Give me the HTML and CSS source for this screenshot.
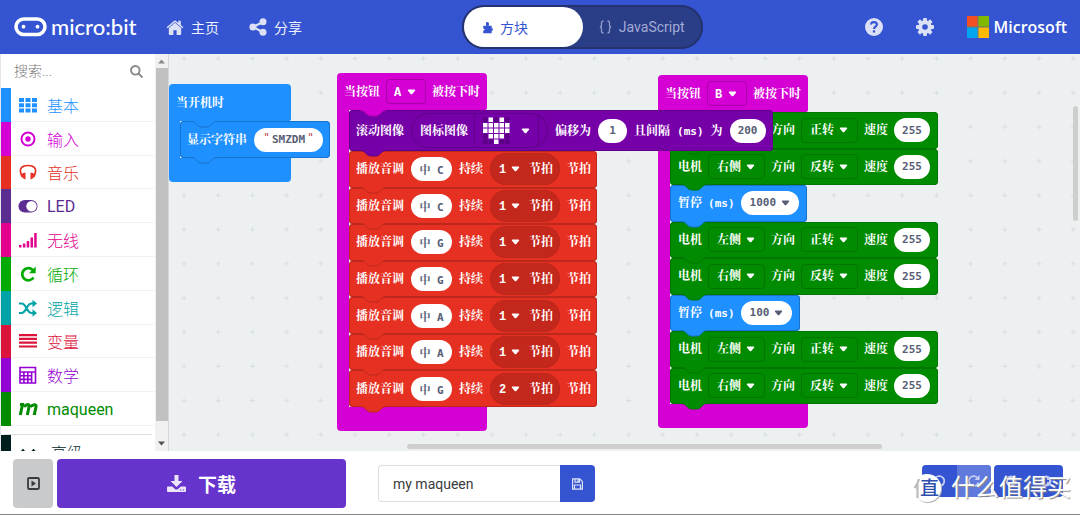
FILE: index.html
```html
<!DOCTYPE html>
<html lang="zh-CN">
<head>
<meta charset="utf-8">
<meta name="viewport" content="width=device-width, initial-scale=1">
<title>my maqueen - micro:bit</title>
<link rel="stylesheet" href="styles.css">
</head>
<body>
<svg class="defs" aria-hidden="true">
  <symbol id="tab" viewBox="0 0 26 8"><path class="tab-fill" d="M0 0V1.5C3 1.5 4 2.5 5 3.500L7 5.500Q8.500 7 11 7H16Q18 7 19.500 5.500L21.500 3.500Q23 1.500 26 1.500V0Z"/><path class="tab-line" d="M0 1.500C3 1.500 4 2.500 5 3.500L7 5.500Q8.500 7 11 7H16Q18 7 19.500 5.500L21.500 3.500Q23 1.500 26 1.500"/></symbol>
</svg>
<header class="topbar">
  <a class="brand" href="#">
    <svg width="33" height="20" viewBox="0 0 33 20"><rect x="2" y="2" width="29" height="15.500" rx="7.750" fill="none" stroke="#fff" stroke-width="3.600"/><circle cx="9.500" cy="9.700" r="1.900" fill="#fff"/><circle cx="23.500" cy="9.700" r="1.900" fill="#fff"/></svg>
    <span>micro:bit</span>
  </a>
  <a class="navlink home" href="#">
    <svg width="18" height="17" viewBox="0 0 18 17" fill="#dce1f7"><path d="M9 3.800 2.800 9v6.200q0 .8.800.8h3.800v-4.800h3.200V16h3.800q.8 0 .8-.8V9z"/><path d="M.6 8.200 8.200 1.700q.8-.6 1.600 0l2.500 2.200V1.800h2.500v4.300l2.600 2.100-.9 1.100L9 2.900 1.500 9.300z"/></svg>
    <span>主页</span>
  </a>
  <a class="navlink" href="#">
    <svg width="18" height="18" viewBox="0 0 18 18"><path d="M14 4 4 9l10 5.300" fill="none" stroke="#dce1f7" stroke-width="2.200"/><g fill="#dce1f7"><circle cx="14" cy="3.800" r="3.500"/><circle cx="3.900" cy="9" r="3.500"/><circle cx="14" cy="14.300" r="3.500"/></g></svg>
    <span>分享</span>
  </a>
  <div class="modes">
    <button class="mode active" type="button">
      <svg width="10" height="13" viewBox="0 0 10 13" fill="#3454d1"><path d="M.3 4.800h3.200C2.400 3 2.900 1 4.400 1s2.100 1.800 1.200 3.800h3.100v2.600q1.300-.3 1.300 1t-1.300 1v2.800H.3V9.300c1.900.7 1.900-2.100 0-1.400z"/></svg>
      <span>方块</span>
    </button>
    <button class="mode" type="button">
      <svg width="13" height="14" viewBox="0 0 13 14" fill="none" stroke="#929ccc" stroke-width="1.300"><path d="M4.500 1Q2.500 1 2.500 3v2Q2.500 7 .8 7q1.700 0 1.700 2v2q0 2 2 2M8.500 1q2 0 2 2v2q0 2 1.700 2-1.700 0-1.700 2v2q0 2-2 2"/></svg>
      <span>JavaScript</span>
    </button>
  </div>
  <div class="tools">
    <button class="icon-btn" type="button" aria-label="帮助">
      <svg width="18" height="18" viewBox="0 0 18 18"><circle cx="9" cy="9" r="9" fill="#dce1f7"/><path d="M6 6.500C6.300 3.300 11.900 3.300 11.900 6.600c0 2.100-2.900 2.100-2.900 4.400" fill="none" stroke="#3454d1" stroke-width="2.100"/><rect x="7.900" y="12.300" width="2.200" height="2.200" fill="#3454d1"/></svg>
    </button>
    <button class="icon-btn" type="button" aria-label="设置">
      <svg width="18" height="18" viewBox="-9 -9 18 18" fill="#dce1f7"><g id="teeth"><rect x="-1.900" y="-9" width="3.800" height="18" rx=".8"/><rect x="-9" y="-1.900" width="18" height="3.800" rx=".8"/></g><use href="#teeth" transform="rotate(45)"/><circle r="6.700"/><circle r="2.800" fill="#3454d1"/></svg>
    </button>
    <a class="ms" href="#">
      <svg width="22" height="22" viewBox="0 0 22 22"><rect width="22" height="22" fill="#737373"/><path fill="#f25022" d="M0 0h10.500v10.500H0z"/><path fill="#7fba00" d="M11.500 0H22v10.500H11.500z"/><path fill="#00a4ef" d="M0 11.500h10.500V22H0z"/><path fill="#ffb900" d="M11.500 11.500H22V22H11.500z"/></svg>
      <span>Microsoft</span>
    </a>
  </div>
</header>

<main class="editor">
  <aside class="toolbox">
    <div class="toolbox-list">
      <div class="search">
        <input type="text" placeholder="搜索..." aria-label="搜索">
        <svg width="13" height="13" viewBox="0 0 13 13" fill="none" stroke="#888" stroke-width="1.900"><circle cx="5.300" cy="5.300" r="4.300"/><path d="m8.500 8.500 4 4"/></svg>
      </div>
      <nav class="cats">
        <a class="cat basic" href="#"><svg width="20" height="20" viewBox="0 0 20 20" fill="currentColor"><path d="M1 3h5v4H1zM7.500 3h5v4h-5zM14 3h5v4h-5zM1 8.300h5v4H1zM7.500 8.300h5v4h-5zM14 8.300h5v4h-5zM1 13.600h5v4H1zM7.500 13.600h5v4h-5zM14 13.600h5v4h-5z"/></svg><span>基本</span></a>
        <a class="cat input" href="#"><svg width="20" height="20" viewBox="0 0 20 20"><circle cx="10" cy="10" r="6.500" fill="none" stroke="currentColor" stroke-width="2"/><circle cx="10" cy="10" r="2.700" fill="currentColor"/></svg><span>输入</span></a>
        <a class="cat music" href="#"><svg width="20" height="20" viewBox="0 0 20 20"><path d="M4.300 15C-1 4.500 6 3.500 10 3.500s11 1 5.700 11.500" fill="none" stroke="currentColor" stroke-width="1.700"/><path d="M4 11.500 7.500 10.500V17.500L4.500 16zM16 11.500l-3.500-1v7l3-1.500z" fill="currentColor"/></svg><span>音乐</span></a>
        <a class="cat led" href="#"><svg width="20" height="20" viewBox="0 0 20 20"><rect x=".5" y="4" width="19" height="12.500" rx="6.250" fill="currentColor"/><circle cx="13.500" cy="10.250" r="5.200" fill="#fff"/></svg><span>LED</span></a>
        <a class="cat radio" href="#"><svg width="20" height="20" viewBox="0 0 20 20" fill="currentColor"><path d="M1 15h2.500v2.500H1zM4.900 13.500h2.500v4H4.900zM8.700 11h2.500v6.500H8.700zM12.500 7.500H15v10h-2.500zM16.200 3h2.500v14.500h-2.500z"/></svg><span>无线</span></a>
        <a class="cat loops" href="#"><svg width="20" height="20" viewBox="0 0 20 20"><path d="M15.500 13.500A6.100 6.100 0 1 1 14.700 6" fill="none" stroke="currentColor" stroke-width="2.700"/><path d="M17.700 2.500v6.800H11z" fill="currentColor"/></svg><span>循环</span></a>
        <a class="cat logic" href="#"><svg width="20" height="20" viewBox="0 0 20 20"><path d="M1 5.500h2.500c5 0 5 9.500 10 9.500H15M1 15h2.500c5 0 5-9.500 10-9.500H15" fill="none" stroke="currentColor" stroke-width="2.200"/><path d="m14.500 1.800 4.500 3.700-4.500 3.700zM14.500 11.300 19 15l-4.500 3.700z" fill="currentColor"/></svg><span>逻辑</span></a>
        <a class="cat vars" href="#"><svg width="20" height="20" viewBox="0 0 20 20" fill="currentColor"><path d="M1 3h18v2.200H1zM1 6.800h18V9H1zM1 10.600h18v2.200H1zM1 14.400h18v2.200H1z"/></svg><span>变量</span></a>
        <a class="cat math" href="#"><svg width="20" height="20" viewBox="0 0 20 20"><path d="M2 2.500h15.500v15.500H2zM2 7h15.500M2 10.700h11.500M2 14.400h11.500M5.900 7v11M9.800 7v11M13.600 7v11" fill="none" stroke="currentColor" stroke-width="1.600"/></svg><span>数学</span></a>
        <a class="cat maqueen" href="#"><svg width="20" height="20" viewBox="0 0 20 20"><path d="M2 5.500h2.500L2.300 16M6 7.800C9 4.500 12 5 11 8L9.300 16M12.500 7.800c3-3.200 6.200-2.500 5.500.2L16.500 14.500h1.700" fill="none" stroke="currentColor" stroke-width="3"/></svg><span>maqueen</span></a>
      </nav>
      <a class="cat advanced" href="#"><svg width="20" height="20" viewBox="0 0 20 20"><path d="m1.500 12.500 3.500-4 3.500 4M12 12.500l3.500-4 3.500 4" fill="none" stroke="currentColor" stroke-width="2.400"/></svg><span>高级</span></a>
    </div>
    <div class="vscroll" aria-hidden="true">
      <svg width="8" height="5" viewBox="0 0 8 5"><path d="M0 4.500h7L3.500.5z" fill="#8a8a8a"/></svg>
      <i></i>
      <svg width="8" height="5" viewBox="0 0 8 5"><path d="M0 .5h7l-3.500 4z" fill="#505050"/></svg>
    </div>
  </aside>

  <section class="workspace">
    <svg class="grid" aria-hidden="true"><defs><pattern id="plus" x="-2" y="-12.500" width="34.200" height="34.200" patternUnits="userSpaceOnUse"><path d="M14.500 17h5M17 14.500v5" stroke="#d9dddf" stroke-width="1"/></pattern></defs><rect width="100%" height="100%" fill="url(#plus)"/></svg>

    <div class="stack on-start blue">
      <div class="head start-head"><span>当开机时</span></div>
      <div class="body">
        <div class="block blue"><svg class="tab top"><use href="#tab"/></svg><span>显示字符串</span><span class="pill string"><i>"</i><input type="text" value="SMZDM" aria-label="字符串"><i>"</i></span><svg class="tab"><use href="#tab"/></svg></div>
      </div>
      <div class="foot"></div>
    </div>

    <div class="stack button-b magenta">
      <div class="head"><span>当按钮</span><select class="drop key" aria-label="按钮"><option>B</option></select><span>被按下时</span><svg class="tab inset"><use href="#tab"/></svg></div>
      <div class="body rows-8">
        <div class="block green"><span>电机</span><select class="drop" aria-label="电机"><option>左侧</option></select><span>方向</span><select class="drop" aria-label="方向"><option>正转</option></select><span>速度</span><input class="pill num" value="255" aria-label="速度"><svg class="tab"><use href="#tab"/></svg></div>
        <div class="block green"><span>电机</span><select class="drop" aria-label="电机"><option>右侧</option></select><span>方向</span><select class="drop" aria-label="方向"><option>反转</option></select><span>速度</span><input class="pill num" value="255" aria-label="速度"><svg class="tab"><use href="#tab"/></svg></div>
        <div class="block blue"><span>暂停</span><span class="mono">(ms)</span><select class="pill pick wide" aria-label="毫秒"><option>1000</option></select><svg class="tab"><use href="#tab"/></svg></div>
        <div class="block green"><span>电机</span><select class="drop" aria-label="电机"><option>左侧</option></select><span>方向</span><select class="drop" aria-label="方向"><option>正转</option></select><span>速度</span><input class="pill num" value="255" aria-label="速度"><svg class="tab"><use href="#tab"/></svg></div>
        <div class="block green"><span>电机</span><select class="drop" aria-label="电机"><option>右侧</option></select><span>方向</span><select class="drop" aria-label="方向"><option>反转</option></select><span>速度</span><input class="pill num" value="255" aria-label="速度"><svg class="tab"><use href="#tab"/></svg></div>
        <div class="block blue"><span>暂停</span><span class="mono">(ms)</span><select class="pill pick" aria-label="毫秒"><option>100</option></select><svg class="tab"><use href="#tab"/></svg></div>
        <div class="block green"><span>电机</span><select class="drop" aria-label="电机"><option>左侧</option></select><span>方向</span><select class="drop" aria-label="方向"><option>正转</option></select><span>速度</span><input class="pill num" value="255" aria-label="速度"><svg class="tab"><use href="#tab"/></svg></div>
        <div class="block green"><span>电机</span><select class="drop" aria-label="电机"><option>右侧</option></select><span>方向</span><select class="drop" aria-label="方向"><option>反转</option></select><span>速度</span><input class="pill num" value="255" aria-label="速度"><svg class="tab"><use href="#tab"/></svg></div>
      </div>
      <div class="foot"></div>
    </div>

    <div class="stack button-a magenta">
      <div class="head"><span>当按钮</span><select class="drop key" aria-label="按钮"><option>A</option></select><span>被按下时</span><svg class="tab inset"><use href="#tab"/></svg></div>
      <div class="body">
        <div class="block purple"><span>滚动图像</span>
          <span class="image-oval"><span>图标图像</span>
            <button class="heart" type="button" aria-label="图标"><svg width="28" height="28" viewBox="0 0 28 28"><path d="M0 .5h4.500V5H0zM11 .5h4.500V5H11zM22 .5h4.500V5H22zM0 17h4.500v4.500H0zM22 17h4.500v4.500H22zM0 22.500h4.500V27H0zM5.500 22.500H10V27H5.500zM16.500 22.500H21V27h-4.500zM22 22.500h4.500V27H22z" fill="#5c0085"/><path d="M5.500.5H10V5H5.500zM16.500.5H21V5h-4.500zM0 6h4.500v4.500H0zM5.500 6H10v4.500H5.500zM11 6h4.500v4.500H11zM16.500 6H21v4.500h-4.500zM22 6h4.500v4.500H22zM0 11.500h4.500V16H0zM5.500 11.500H10V16H5.500zM11 11.500h4.500V16H11zM16.500 11.500H21V16h-4.500zM22 11.500h4.500V16H22zM5.500 17H10v4.500H5.500zM11 17h4.500v4.500H11zM16.500 17H21v4.500h-4.500zM11 22.500h4.500V27H11z" fill="#fff"/></svg><svg width="9" height="6" viewBox="0 0 9 6"><path d="M1.500.5h6q1.200.3.500 1.200L5.300 4.900q-.8.800-1.600 0L1 1.700Q.3.800 1.500.5z" fill="#fff"/></svg></button>
          </span>
          <span>偏移为</span><input class="pill one" value="1" aria-label="偏移"><span>且间隔</span><span class="mono">(ms)</span><span>为</span><input class="pill num" value="200" aria-label="间隔"><svg class="tab"><use href="#tab"/></svg></div>
        <div class="tune">
          <div class="block red"><span>播放音调</span><input class="pill note" value="中 C" aria-label="音调"><span>持续</span><span class="beat"><select aria-label="节拍"><option>1</option></select><span>节拍</span></span><span>节拍</span><svg class="tab"><use href="#tab"/></svg></div>
          <div class="block red"><span>播放音调</span><input class="pill note" value="中 C" aria-label="音调"><span>持续</span><span class="beat"><select aria-label="节拍"><option>1</option></select><span>节拍</span></span><span>节拍</span><svg class="tab"><use href="#tab"/></svg></div>
          <div class="block red"><span>播放音调</span><input class="pill note" value="中 G" aria-label="音调"><span>持续</span><span class="beat"><select aria-label="节拍"><option>1</option></select><span>节拍</span></span><span>节拍</span><svg class="tab"><use href="#tab"/></svg></div>
          <div class="block red"><span>播放音调</span><input class="pill note" value="中 G" aria-label="音调"><span>持续</span><span class="beat"><select aria-label="节拍"><option>1</option></select><span>节拍</span></span><span>节拍</span><svg class="tab"><use href="#tab"/></svg></div>
          <div class="block red"><span>播放音调</span><input class="pill note" value="中 A" aria-label="音调"><span>持续</span><span class="beat"><select aria-label="节拍"><option>1</option></select><span>节拍</span></span><span>节拍</span><svg class="tab"><use href="#tab"/></svg></div>
          <div class="block red"><span>播放音调</span><input class="pill note" value="中 A" aria-label="音调"><span>持续</span><span class="beat"><select aria-label="节拍"><option>1</option></select><span>节拍</span></span><span>节拍</span><svg class="tab"><use href="#tab"/></svg></div>
          <div class="block red"><span>播放音调</span><input class="pill note" value="中 G" aria-label="音调"><span>持续</span><span class="beat"><select aria-label="节拍"><option>2</option></select><span>节拍</span></span><span>节拍</span><svg class="tab"><use href="#tab"/></svg></div>
        </div>
      </div>
      <div class="foot"></div>
    </div>
    <i class="bar-h"></i>
    <i class="bar-v"></i>
  </section>
</main>

<footer class="bottombar">
  <button class="sim" type="button" aria-label="模拟器"><svg width="13" height="13" viewBox="0 0 13 13"><rect x="1" y="1" width="11" height="11" rx="1.300" fill="none" stroke="#3b3b3d" stroke-width="1.800"/><path d="M4.500 3.500v6l4.500-3z" fill="#3b3b3d"/></svg></button>
  <button class="download" type="button"><svg width="19" height="18" viewBox="0 0 19 18" fill="#ece5f9"><path d="M7.500 0h4v6h4l-6 6-6-6h4z"/><path d="M1 11.500h4.200l2.800 2.600q1.500 1 3 0l2.800-2.600H18q1 0 1 1V16q0 1-1 1H1q-1 0-1-1v-3.500q0-1 1-1z"/><path d="M13 14.500h1.300v1H13zM15.800 14.500h1.300v1h-1.300z" fill="#63c"/></svg><span>下载</span></button>
  <div class="project">
    <input type="text" value="my maqueen" aria-label="项目名称">
    <button type="button" aria-label="保存"><svg width="11" height="12" viewBox="0 0 11 12" fill="none" stroke="#dce1f7" stroke-width="1.200"><path d="M.6.800h7.200l2.600 2.600v7.800H.6zM3 .800v3.400h4.500V.8M2.500 11V7h6v4M6 1.500v2"/></svg></button>
  </div>
  <div class="history">
    <div class="pair"><button type="button" aria-label="撤销"><svg width="12" height="12" viewBox="0 0 12 12"><path d="M2 3.500a5 5 0 1 1-.5 4" fill="none" stroke="#c3cdf3" stroke-width="1.800"/><path d="M.5 0v5h5z" fill="#c3cdf3"/></svg></button><button class="faded" type="button" aria-label="重做"><svg width="12" height="12" viewBox="0 0 12 12"><path d="M10 3.500a5 5 0 1 0 .5 4" fill="none" stroke="#c3cdf3" stroke-width="1.800"/><path d="M11.500 0v5h-5z" fill="#c3cdf3"/></svg></button></div>
    <div class="pair"><button type="button" aria-label="缩小"><svg width="12" height="12" viewBox="0 0 12 12"><circle cx="6" cy="6" r="5.500" fill="#c3cdf3"/><path d="M3 6h6" stroke="#3454d1" stroke-width="1.800"/></svg></button><button type="button" aria-label="放大"><svg width="12" height="12" viewBox="0 0 12 12"><circle cx="6" cy="6" r="5.500" fill="#c3cdf3"/><path d="M3 6h6M6 3v6" stroke="#3454d1" stroke-width="1.800"/></svg></button></div>
    <div class="watermark"><svg width="32" height="34" viewBox="0 0 32 34" aria-hidden="true"><circle cx="16" cy="18" r="14" fill="#b5b5b8"/><circle cx="15" cy="17" r="14" fill="#fff"/><path d="M7 8Q6 13 2.500 17M5.500 13v14" fill="none" stroke="#bbb" stroke-width="2.200"/><text x="8" y="24" class="wm-char">直</text></svg><span>什么值得买</span></div>
  </div>
</footer>
</body>
</html>
```
FILE: styles.css
```css
* { box-sizing: border-box; }

body {
  margin: 0;
  height: 100vh;
  display: flex;
  flex-direction: column;
  overflow: hidden;
  background: #fff;
  font-family: Roboto, "Noto Sans CJK SC", sans-serif;
  font-size: 14px;
  color: #3b3b3d;
}

button, input, select { font: inherit; color: inherit; border: 0; padding: 0; margin: 0; background: none; outline: 0; }
button { cursor: pointer; display: flex; align-items: center; justify-content: center; }
select { appearance: none; }
input { min-width: 0; }
a { text-decoration: none; color: inherit; }
svg { display: block; flex: none; }
i { font-style: normal; }
.defs { position: absolute; width: 0; height: 0; }

/* top bar */
.topbar {
  position: relative;
  flex: none;
  height: 54px;
  display: flex;
  align-items: center;
  padding: 0 13px 0 14px;
  background: #3454d1;
  color: #fff;
}
.brand { display: flex; align-items: center; gap: 4px; font: 500 22px/26px Lato, sans-serif; width: 152px; }
.navlink { display: flex; align-items: center; gap: 7px; margin-right: 30px; color: #f0f2fc; white-space: nowrap; }
.modes {
  position: absolute;
  left: 50%;
  top: 5px;
  width: 241px;
  height: 44px;
  margin-left: -78px;
  padding: 2px;
  display: grid;
  grid-template-columns: 1fr 1fr;
  border-radius: 22px;
  background: #2a3d87;
  box-shadow: inset 0 0 0 2px #24336f;
}
.mode { gap: 7px; border-radius: 20px; color: #a3acd6; }
.mode.active { justify-content: flex-start; padding-left: 19px; background: #fff; color: #3454d1; }
.tools { margin-left: auto; display: flex; align-items: center; gap: 33px; }
.ms { display: flex; align-items: center; gap: 5px; font: 600 16px/22px "Open Sans", sans-serif; }

/* toolbox */
.editor { flex: 1; min-height: 0; display: flex; background: #ecf0f1; }
.toolbox { flex: none; width: 169px; display: flex; border-left: 1px solid #e4e8ea; border-right: 1px solid #d5d9da; overflow: hidden; }
.toolbox-list { flex: 1; background: #fff; overflow: hidden; }
.search { height: 34px; display: flex; align-items: center; padding: 0 12px 0 13px; }
.search input { flex: 1; font-weight: 300; }
.search input::placeholder { color: #777; opacity: 1; }
.cats { display: grid; grid-auto-rows: 1fr; min-height: 338px; }
.cat {
  display: flex;
  align-items: center;
  gap: 9px;
  padding-left: 7px;
  border-left: 10px solid currentColor;
  box-shadow: inset 0 -1px #f0f1f2;
  font-size: 16px;
  font-weight: 300;
}
.cat.led, .cat.maqueen { font-weight: 400; }
.basic { color: #1e90ff; }
.cat.input { color: #d400d4; }
.music { color: #e63022; }
.led { color: #5c2d91; }
.radio { color: #e3008c; }
.loops { color: #00aa00; }
.logic { color: #00a4a6; }
.vars { color: #dc143c; }
.math { color: #9400d3; }
.maqueen { color: #008b00; }
.advanced { height: 34px; margin-top: 9px; color: #001e1e; gap: 13px; box-shadow: 0 -4px 0 -3px #ddd; }
.vscroll { width: 13px; padding: 5px 0; display: flex; flex-direction: column; align-items: center; gap: 4px; background: #f1f1f1; }
.vscroll i { flex: 1; width: 12px; margin-bottom: 16px; background: #c1c1c1; }

/* workspace */
.workspace { flex: 1; position: relative; overflow: hidden; }
.grid { position: absolute; inset: 0; width: 100%; height: 100%; }
.bar-h, .bar-v { position: absolute; border-radius: 3px; background: #cecece; }
.bar-h { left: 238px; bottom: 2px; width: 475px; height: 5px; }
.bar-v { right: 2px; top: 52px; width: 5px; height: 115px; }

.stack, .block { color: #fff; font: 700 12px/16px "Liberation Mono", "Noto Serif CJK SC", "Noto Sans CJK SC", monospace; white-space: nowrap; }
.stack { position: absolute; isolation: isolate; display: flex; flex-direction: column; align-items: flex-start; --fill: #d400d4; --line: #aa00aa; }
.stack span { padding-top: 2px; }
.stack .beat, .stack .image-oval, .stack .string { padding-top: 0; }
.on-start { left: 0; top: 30px; }
.button-a { left: 168px; top: 19px; }
.button-b { left: 489px; top: 21px; }
.stack.blue, .blue { --fill: #1e90ff; --line: #1873cc; }
.green { --fill: #008b00; --line: #007600; }
.red { --fill: #e63022; --line: #bd281d; }
.purple { --fill: #7600a8; --line: #61008a; }

.head {
  position: relative;
  z-index: 1;
  display: flex;
  align-items: center;
  gap: 6px;
  width: 150px;
  height: 37px;
  padding: 0 7px;
  border-radius: 4px 4px 2px 0;
  background: var(--fill);
}
.start-head { width: 122px; z-index: 0; }
.body { border-left: 12px solid #d400d4; }
.on-start .body { border-color: #1e90ff; border-left-width: 11px; }
.rows-8 { display: grid; grid-auto-rows: 1fr; justify-items: start; min-height: 292px; }
.tune { display: grid; grid-auto-rows: 1fr; justify-items: start; min-height: 256px; }
.foot { width: 150px; height: 24px; border-radius: 0 0 4px 4px; background: var(--fill); }
.on-start .foot { width: 122px; }

.block {
  position: relative;
  display: flex;
  align-items: center;
  gap: 6px;
  min-height: 36px;
  padding: 0 8px;
  border-radius: 4px;
  background: var(--fill);
  box-shadow: inset 0 0 0 1px var(--line);
}
.on-start .block { min-height: 37px; width: 150px; padding: 0 7px; gap: 7px; }
.block.purple { min-height: 41px; padding: 0 7px; gap: 7px; }
.block.red { padding: 0 6px 0 7px; gap: 7px; }
.tab { position: absolute; z-index: 2; left: 11px; bottom: -6px; width: 26px; height: 8px; overflow: visible; }
.tab.inset { left: 23px; bottom: -7px; }
.tab.top { top: -1px; bottom: auto; }
.tab-fill { fill: var(--fill); }
.tab-line { fill: none; stroke: var(--line); }

.mono, .pill { font-family: "DejaVu Sans Mono", "Noto Serif CJK SC", "Noto Sans CJK SC", monospace; font-size: 11px; }
.pill { height: 24px; border-radius: 12px; background-color: #fff; color: #575e75; text-align: center; }
.num { width: 36px; }
.one { width: 29px; }
.note { width: 41px; }
.string { display: flex; justify-content: center; width: 69px; line-height: 24px; }
.string input { width: 36px; text-align: center; }
.string i { width: 8px; color: #b84040; font-weight: 400; line-height: 20px; }

.drop {
  width: 57px;
  height: 25px;
  padding: 2px 0 0 8px;
  border: 1px solid var(--line);
  border-radius: 4px;
}
.drop, .pick, .beat select {
  background-repeat: no-repeat;
  background-position: right 9px center;
  background-image: url("data:image/svg+xml,%3Csvg xmlns='http://www.w3.org/2000/svg' width='9' height='6'%3E%3Cpath d='M1.500.5h6q1.200.3.500 1.200L5.300 4.900q-.8.800-1.600 0L1 1.700Q.3.800 1.500.5z' fill='%23fff'/%3E%3C/svg%3E");
}
.drop.key { width: 40px; padding-left: 7px; }
.pick {
  width: 51px;
  padding-left: 9px;
  text-align: left;
  background-image: url("data:image/svg+xml,%3Csvg xmlns='http://www.w3.org/2000/svg' width='9' height='6'%3E%3Cpath d='M1.500.5h6q1.200.3.500 1.200L5.300 4.900q-.8.800-1.600 0L1 1.700Q.3.800 1.500.5z' fill='%23575e75'/%3E%3C/svg%3E");
}
.pick.wide { width: 58px; }
.beat { display: flex; align-items: center; justify-content: space-between; width: 70px; height: 32px; padding: 0 7px 0 9px; border-radius: 16px; background: #c4271b; box-shadow: inset 0 0 0 1px #bd281d; }
.beat select { width: 22px; padding-top: 2px; background-position: right 1px center; }
.image-oval { display: flex; align-items: center; gap: 6px; width: 137px; height: 35px; padding: 0 9px; border-radius: 18px; box-shadow: inset 0 0 0 1px var(--line); }
.heart { flex: 1; gap: 10px; height: 33px; border-left: 1px solid var(--line); border-right: 1px solid var(--line); }

/* bottom bar */
.bottombar { flex: none; height: 64px; display: flex; align-items: flex-start; padding: 8px 17px 0 13px; border-bottom: 1px solid #85858a; }
.sim { width: 40px; height: 49px; margin-right: 4px; border-radius: 4px; background: #c9cacc; }
.download { width: 289px; height: 49px; gap: 12px; border-radius: 4px; background: #63c; color: #fff; font-size: 19px; font-weight: 700; }
.project { display: flex; width: 217px; height: 37px; margin: 6px 0 0 32px; }
.project input { flex: 1; padding-left: 14px; border: 1px solid #dededf; border-right: 0; border-radius: 4px 0 0 4px; }
.project button { width: 35px; border-radius: 0 4px 4px 0; background: #3454d1; }
.history { position: relative; display: flex; gap: 3px; margin: 6px 0 0 auto; }
.pair { display: flex; width: 69px; height: 32px; border-radius: 4px; overflow: hidden; background: #3454d1; }
.pair button { flex: 1; }
.pair .faded { background: #6079dc; }
.watermark { position: absolute; right: -8px; top: 6px; display: flex; align-items: center; gap: 7px; color: #fff; font-size: 24px; line-height: 34px; text-shadow: 1px 1px 1px #8a8a8a; white-space: nowrap; }
.wm-char { font-size: 19px; font-weight: 500; fill: #2f4fae; text-shadow: none; }
```
